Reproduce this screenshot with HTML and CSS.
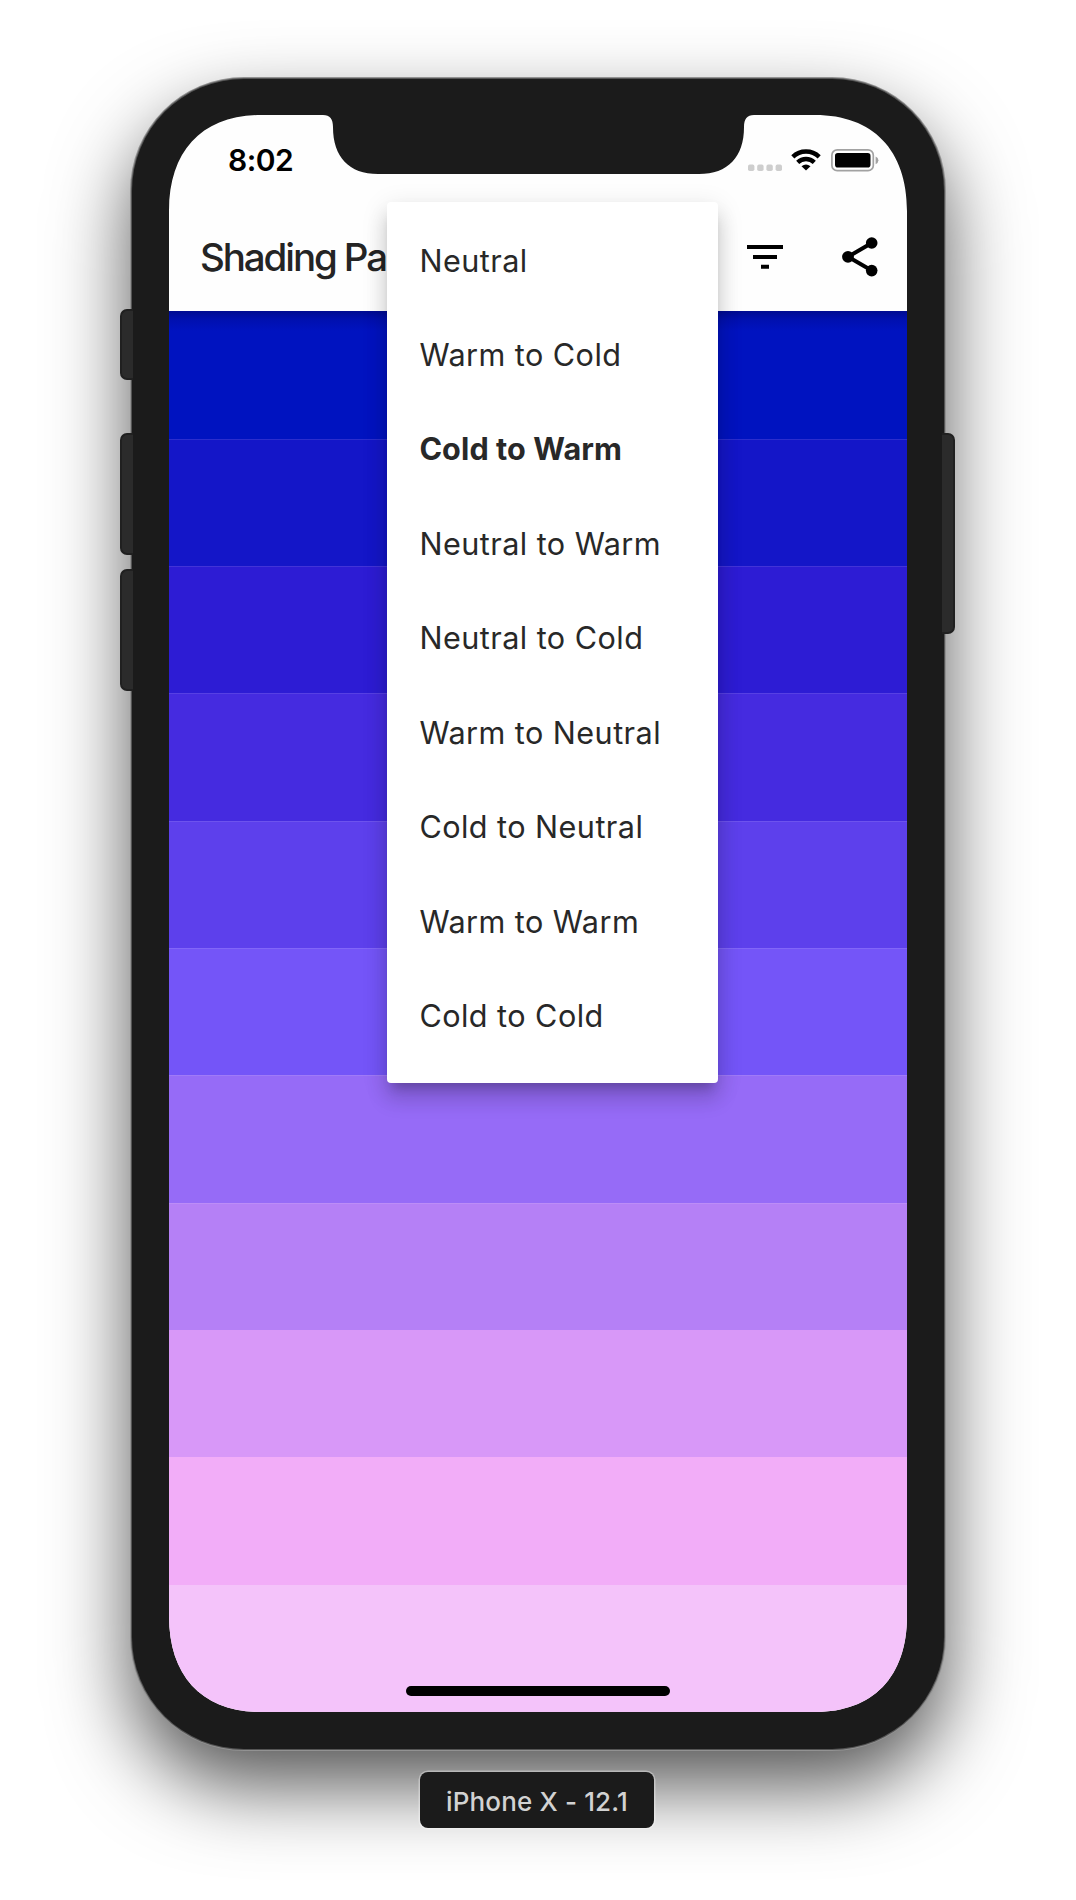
FILE: index.html
```html
<!DOCTYPE html>
<html lang="en">
<head>
<meta charset="utf-8">
<title>Shading</title>
<link rel="stylesheet" href="styles.css">
</head>
<body>
<main class="stage">
  <div class="phone">
    <i class="key key-mute"></i>
    <i class="key key-up"></i>
    <i class="key key-down"></i>
    <i class="key key-power"></i>
    <div class="screen">
      <div class="status">
        <span class="time">8:02</span>
        <div class="indicators">
          <svg class="signal" width="36" height="8" viewBox="0 0 36 8"><g fill="#cecece"><rect x="0" y=".6" width="6.4" height="6.4" rx="1.8"/><rect x="9.2" y=".6" width="6.4" height="6.4" rx="1.8"/><rect x="18.4" y=".6" width="6.4" height="6.4" rx="1.8"/><rect x="27.6" y=".6" width="6.4" height="6.4" rx="1.8"/></g></svg>
          <svg class="wifi" width="30" height="22" viewBox="0 0 30 22"><path fill="none" stroke="#000" stroke-width="4.4" d="M1.8 7.8A19 19 0 0 1 28.2 7.8M6.7 13.4A12 12 0 0 1 23.3 13.4"/><path d="M15 21.6L10.5 17.2Q15 13.6 19.5 17.2Z"/></svg>
          <svg class="battery" width="48" height="23" viewBox="0 0 48 23"><rect x=".9" y=".9" width="41.4" height="20.8" rx="5.3" fill="none" stroke="#a2a2a2" stroke-width="1.7"/><rect x="4" y="4" width="35.5" height="14.6" rx="2.8"/><path fill="#a2a2a2" d="M44.6 7.4Q47.4 8.6 47.4 11.3T44.6 15.2Z"/></svg>
        </div>
      </div>
      <header class="appbar">
        <h1>Shading Pa</h1>
        <div class="actions">
          <svg width="36" height="24" viewBox="0 0 36 24"><path d="M0 0H36V4H0ZM6 10H30V14H6ZM14 19.8H22V23.8H14Z"/></svg>
          <svg width="36" height="40" viewBox="0 0 36 40"><path fill="none" stroke="#000" stroke-width="4" d="M29.7 6L6 19.8L29.7 33.6"/><circle cx="6" cy="19.8" r="5.9"/><circle cx="29.7" cy="6" r="5.8"/><circle cx="29.7" cy="33.6" r="5.8"/></svg>
        </div>
      </header>
      <div class="bands">
        <div class="band b1"></div>
        <div class="band b2"></div>
        <div class="band b3"></div>
        <div class="band b4"></div>
        <div class="band b5"></div>
        <div class="band b6"></div>
        <div class="band b7"></div>
        <div class="band b8"></div>
        <div class="band b9"></div>
        <div class="band b10"></div>
        <div class="band b11"></div>
      </div>
      <ul class="menu">
        <li>Neutral</li>
        <li>Warm to Cold</li>
        <li class="selected">Cold to Warm</li>
        <li>Neutral to Warm</li>
        <li>Neutral to Cold</li>
        <li>Warm to Neutral</li>
        <li>Cold to Neutral</li>
        <li>Warm to Warm</li>
        <li>Cold to Cold</li>
      </ul>
      <div class="home"></div>
    </div>
  </div>
  <div class="label">iPhone X - 12.1</div>
</main>
</body>
</html>
```
FILE: styles.css
```css
* { box-sizing: border-box; }

body {
  margin: 0;
  background: #fff;
  font-family: Inter, "Liberation Sans", sans-serif;
}

.stage {
  height: 1900px;
  padding-top: 79px;
  display: flex;
  flex-direction: column;
  align-items: center;
  overflow: hidden;
}

.phone {
  position: relative;
  width: 812px;
  height: 1670px;
  flex: none;
  padding: 36px 37px 37px;
  background: #1b1b1b;
  border-radius: 112px;
  box-shadow: 0 0 0 1px #555, 0 0 0 2px #929292, 0 36px 80px rgba(0, 0, 0, .68);
}

/* hardware buttons */
.key {
  position: absolute;
  left: -12px;
  width: 13px;
  background: #2b2b2b;
  border: 2px solid #202020;
  border-right: 0;
  border-radius: 7px 0 0 7px;
}
.key-mute { top: 230px; height: 71px; }
.key-up { top: 354px; height: 122px; }
.key-down { top: 490px; height: 122px; }
.key-power {
  top: 354px;
  left: 810px;
  width: 13px;
  height: 201px;
  border: 2px solid #202020;
  border-left: 0;
  border-radius: 0 7px 7px 0;
}

.screen {
  position: relative;
  width: 738px;
  height: 1597px;
  display: flex;
  flex-direction: column;
  background: #fefefe;
  clip-path: path("M0 96C0 35 34 0 92 0L154 0C161 0 164 4 164 12C164 42 180 59 209 59L530 59C559 59 575 42 575 12C575 4 578 0 585 0L646 0C704 0 738 35 738 96L738 1501C738 1562 704 1597 646 1597L92 1597C34 1597 0 1562 0 1501Z");
}

.status {
  height: 87px;
  flex: none;
  display: flex;
  justify-content: space-between;
  padding: 26px 28px 0 59px;
}
.time {
  font-size: 30px;
  line-height: 38px;
  font-weight: 600;
  letter-spacing: -.5px;
}
.indicators { display: flex; align-items: flex-start; padding-top: 7px; }
.signal { margin: 16px 7px 0 0; }
.wifi { margin: 1px 10px 0 0; }
.battery { margin-top: 1px; }

.appbar {
  height: 109.6px;
  flex: none;
  display: flex;
  justify-content: space-between;
  align-items: center;
  padding: 0 29.4px 0 31px;
}
h1 {
  margin: 0;
  font-size: 38.5px;
  font-weight: 500;
  line-height: 48px;
  letter-spacing: -2.1px;
  color: #242424;
}
.actions { display: flex; align-items: center; gap: 58.6px; }

.bands {
  flex: 1;
  display: flex;
  flex-direction: column;
  margin-top: -.4px;
}
.band { flex: 1; box-shadow: inset 0 1px rgba(255, 255, 255, .1); }
.b1 {
  background: linear-gradient(#000c90, #0010ae 8px, #0013c0 20px);
  box-shadow: none;
}
.b2 { background: #1416c8; }
.b3 { background: #2d1cd4; }
.b4 { background: #452be0; }
.b5 { background: #5d40ec; }
.b6 { background: #7455f8; }
.b7 { background: #966bf7; }
.b8 { background: #b580f6; }
.b9 { background: #d898f8; box-shadow: none; }
.b10 { background: #f2adf8; box-shadow: none; }
.b11 { background: #f4c3fa; box-shadow: none; }

.menu {
  position: absolute;
  left: 218px;
  top: 87px;
  width: 331px;
  height: 880.5px;
  margin: 0;
  padding: 15.5px 0;
  list-style: none;
  background: #fff;
  border-radius: 4px;
  box-shadow: 0 10px 10px -6px rgba(0, 0, 0, .2), 0 16px 20px 2px rgba(0, 0, 0, .12), 0 6px 26px 2px rgba(0, 0, 0, .1);
}
.menu li {
  height: 94.45px;
  padding-left: 32.4px;
  font-size: 30.6px;
  line-height: 86px;
  letter-spacing: .45px;
  color: #282828;
  white-space: nowrap;
}
.menu .selected { font-weight: 700; letter-spacing: .1px; }

.home {
  position: absolute;
  left: 237px;
  top: 1571px;
  width: 264px;
  height: 10px;
  border-radius: 5px;
  background: #000;
}

.label {
  position: relative;
  margin-top: 23px;
  left: -1px;
  width: 234px;
  height: 56px;
  border-radius: 8px;
  background: #1b1b1b;
  box-shadow: 0 0 0 1.5px rgba(255, 255, 255, .35);
  color: #d2d2d2;
  font-size: 26px;
  font-weight: 450;
  letter-spacing: .15px;
  line-height: 60px;
  text-align: center;
}
```
